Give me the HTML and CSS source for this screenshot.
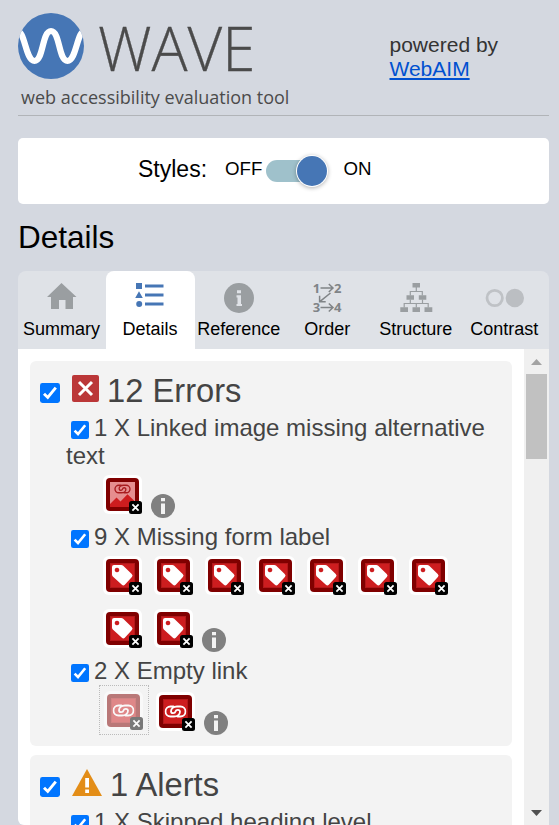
FILE: index.html
```html
<!DOCTYPE html>
<html lang="en">
<head>
<meta charset="utf-8">
<title>WAVE</title>
<link rel="stylesheet" href="styles.css">
</head>
<body>
<svg class="defs" aria-hidden="true">
  <symbol id="check" viewBox="0 0 18 18">
    <rect width="18" height="18" rx="2.2" fill="#0075ff"/>
    <path d="M3.6 9.6 7 13 14.2 4.2" fill="none" stroke="#fff" stroke-width="2.6"/>
  </symbol>
  <symbol id="info" viewBox="0 0 24 24">
    <circle cx="12" cy="12" r="12" fill="#808080"/>
    <path d="M10 4h4v3.3h-4zM10 9.4h4V20h-4z" fill="#f3f3f3"/>
  </symbol>
  <symbol id="tile" viewBox="0 0 39 39">
    <rect width="39" height="39" rx="6" fill="#fff"/>
    <rect x="3" y="3" width="33" height="33" rx="4" fill="#800000"/>
    <rect x="7" y="7" width="25" height="25" fill="#b3181a"/>
    <rect x="8" y="8" width="23" height="23" fill="#cd1d1f"/>
  </symbol>
  <symbol id="badge" viewBox="0 0 39 39">
    <rect x="26" y="26" width="13" height="13" rx="2.5" fill="#000"/>
    <path d="M29.4 29.4 35.6 35.6M35.6 29.4 29.4 35.6" stroke="#fff" stroke-width="1.8"/>
  </symbol>
  <symbol id="label" viewBox="0 0 39 39">
    <use href="#tile"/>
    <path fill="#fff" fill-rule="evenodd" d="M11 9h7.200q1.200 0 2 .8l8.500 8.300q1.600 1.500.2 3l-7.100 7.600q-1.400 1.500-2.900.1L9.800 20.500Q9 19.700 9 18.500V11q0-2 2-2zm3 2.700a2.300 2.300 0 1 0 .01 0z"/>
    <use href="#badge"/>
  </symbol>
  <symbol id="chain" viewBox="0 0 22 14">
    <path d="M9 2H6a5 5 0 0 0 0 10h3.500C13 12 15.500 9.800 15.500 7.300Q15.500 5.300 13.300 5.300M13 12h3a5 5 0 0 0 0-10h-3.500C9 2 6.500 4.200 6.500 6.700Q6.500 8.700 8.700 8.700 10.600 8.700 11 7T13.300 5.300" fill="none" stroke="currentColor" stroke-width="1.800" stroke-linecap="round"/>
  </symbol>
  <symbol id="link" viewBox="0 0 39 39">
    <use href="#tile"/>
    <use href="#chain" x="8.500" y="12.500" width="22" height="14" color="#fff"/>
    <use href="#badge"/>
  </symbol>
  <symbol id="linked-image" viewBox="0 0 39 39">
    <use href="#tile"/>
    <rect x="7" y="7" width="25" height="25" fill="#e68e8f"/>
    <path d="M7 29 13.500 22.500 17.500 26.500 24.500 19.300 32 26.500V32H7z" fill="#cd1d1f"/>
    <use href="#chain" x="10.500" y="8.800" width="18" height="10.500" color="#a81c1f"/>
    <use href="#badge"/>
  </symbol>
</svg>

<header class="header">
  <div class="brand">
    <div class="brand-row">
      <svg class="logo" viewBox="0 0 66 66">
        <clipPath id="disc"><circle cx="33" cy="33" r="33"/></clipPath>
        <circle cx="33" cy="33" r="33" fill="#4676b5"/>
        <path clip-path="url(#disc)" d="M-1 18C7 17 7.500 48 16.500 48S24 18 33 18s7.500 30 16.500 30S59 17 67 18" fill="none" stroke="#fff" stroke-width="6.200"/>
      </svg>
      <span class="wordmark">WAVE</span>
    </div>
    <div class="tagline">web accessibility evaluation tool</div>
  </div>
  <p class="powered">powered by<br><a href="#">WebAIM</a></p>
</header>

<section class="styles-bar">
  <span class="styles-label">Styles:</span>
  <span class="state">OFF</span>
  <span class="switch"><span class="knob"></span></span>
  <span class="state">ON</span>
</section>

<h1 class="title">Details</h1>

<nav class="tabs">
  <div class="tab">
    <svg class="tab-icon" viewBox="0 0 40 34"><path d="M19.500 2 34.500 16H31V28H23.500V19H17V28H9V16H5z" fill="#9a9ea1"/></svg>
    <span>Summary</span>
  </div>
  <div class="tab active">
    <svg class="tab-icon" viewBox="0 0 40 34"><g fill="#4676b5"><path d="M6 2h6v6H6zM9 10.300 12.800 17H5.200z"/><circle cx="9.200" cy="23" r="3"/><path d="M15 3.500h18.500v3H15zM15 12.500h18.500v3H15zM15 21.500h18.500v3H15z"/></g></svg>
    <span>Details</span>
  </div>
  <div class="tab">
    <svg class="tab-icon" viewBox="0 0 40 34"><circle cx="20" cy="17" r="15" fill="#9a9ea1"/><path d="M18 9.300h4v3h-4zM17.500 14.300h4.500V23h1v2h-5.500v-2h1v-6.500h-1z" fill="#dfe2e7"/></svg>
    <span>Reference</span>
  </div>
  <div class="tab">
    <svg class="tab-icon" viewBox="0 0 40 34"><g class="order-digits"><text x="5.800" y="11.500">1</text><text x="27" y="11.500">2</text><text x="5.800" y="31">3</text><text x="27" y="31">4</text></g><g fill="none" stroke="#808487" stroke-width="1.500"><path d="M13.500 7H26M21.800 3 26 7 21.800 11M13.500 26.500H26M21.800 22.500 26 26.500 21.800 30.500M23.500 12 12.500 20.800M12.600 14.800V20.700H18.700"/></g></svg>
    <span>Order</span>
  </div>
  <div class="tab">
    <svg class="tab-icon" viewBox="0 0 40 34"><path d="M16.500 2H24v4.500h-7.500zM10.500 14.200h7.500v4.500h-7.500zM22.800 14.200h7.500v4.500h-7.500zM4.300 26.300H12V31H4.300zM16.500 26.300H24V31h-7.500zM28.500 26.300h7.800V31h-7.800z" fill="#9a9ea1"/><path d="M20.300 6v4.500M14.300 14.500v-4h12v4M14.300 18.500v4M26.500 18.500v4M8.200 26.500v-4h24v4M20.300 22.500v4" fill="none" stroke="#9a9ea1" stroke-width="1.200"/></svg>
    <span>Structure</span>
  </div>
  <div class="tab">
    <svg class="tab-icon" viewBox="0 0 40 34"><circle cx="10.700" cy="17" r="7.700" fill="none" stroke="#bfc2c6" stroke-width="2.800"/><circle cx="30.800" cy="17" r="9.200" fill="#bbbec2"/></svg>
    <span>Contrast</span>
  </div>
</nav>

<main class="panel">
  <div class="groups">
    <section class="group">
      <h2 class="group-head">
        <svg class="check-lg"><use href="#check"/></svg>
        <svg class="error-icon" viewBox="0 0 27 27"><rect width="27" height="27" rx="2" fill="#bb3738"/><path d="M7 7 20 20M20 7 7 20" stroke="#fff" stroke-width="3"/></svg>
        <span>12 Errors</span>
      </h2>
      <div class="item">
        <h3><svg class="check"><use href="#check"/></svg>1 X Linked image missing alternative text</h3>
        <div class="icons first">
          <svg class="icon"><use href="#linked-image"/></svg>
          <svg class="info"><use href="#info"/></svg>
        </div>
      </div>
      <div class="item">
        <h3><svg class="check"><use href="#check"/></svg>9 X Missing form label</h3>
        <div class="icons labels">
          <svg class="icon"><use href="#label"/></svg>
          <svg class="icon"><use href="#label"/></svg>
          <svg class="icon"><use href="#label"/></svg>
          <svg class="icon"><use href="#label"/></svg>
          <svg class="icon"><use href="#label"/></svg>
          <svg class="icon"><use href="#label"/></svg>
          <svg class="icon"><use href="#label"/></svg>
          <svg class="icon"><use href="#label"/></svg>
          <svg class="icon"><use href="#label"/></svg>
          <svg class="info"><use href="#info"/></svg>
        </div>
      </div>
      <div class="item">
        <h3><svg class="check"><use href="#check"/></svg>2 X Empty link</h3>
        <div class="icons links">
          <span class="selected"><svg class="icon"><use href="#link"/></svg></span>
          <svg class="icon"><use href="#link"/></svg>
          <svg class="info"><use href="#info"/></svg>
        </div>
      </div>
    </section>
    <section class="group">
      <h2 class="group-head">
        <svg class="check-lg"><use href="#check"/></svg>
        <svg class="alert-icon" viewBox="0 0 30 27"><path d="M15 0 30 27H0z" fill="#e38d17"/><path d="M13.200 9h3.800v9.500h-3.800zM13.200 20.500h3.800v3.500h-3.800z" fill="#fff"/></svg>
        <span>1 Alerts</span>
      </h2>
      <div class="item">
        <h3><svg class="check"><use href="#check"/></svg>1 X Skipped heading level</h3>
      </div>
    </section>
  </div>
  <div class="scrollbar">
    <svg class="arrow" viewBox="0 0 11 6"><path d="M5.500 0 11 6H0z" fill="#a3a3a3"/></svg>
    <div class="thumb"></div>
    <svg class="arrow down" viewBox="0 0 11 6"><path d="M0 0H11L5.500 6z" fill="#505050"/></svg>
  </div>
</main>
</body>
</html>
```
FILE: styles.css
```css
* { box-sizing: border-box; }
body {
  margin: 0;
  height: 825px;
  padding: 0 10px 0 18px;
  overflow: hidden;
  display: flex;
  flex-direction: column;
  background: #d4d8e0;
  color: #000;
  font-family: "Liberation Sans", Arial, sans-serif;
}
svg { display: block; flex: none; }
.defs { position: absolute; width: 0; height: 0; }
h1, h2, h3, p { margin: 0; font-weight: 400; }

.header {
  flex: none;
  height: 116px;
  display: flex;
  border-bottom: 1px solid #b1b4b8;
}
.brand { width: 371.500px; padding-top: 13px; color: #4b4b4b; }
.brand-row { display: flex; height: 66px; gap: 14px; }
.logo { width: 66px; height: 66px; }
.wordmark {
  font: 300 60px/66px "Open Sans", sans-serif;
  padding-top: 2px;
  -webkit-text-stroke: .3px #4b4b4b;
}
.tagline {
  font: 400 18px/24px "Open Sans", sans-serif;
  padding: 6px 0 0 3px;
  white-space: nowrap;
}
.powered {
  padding-top: 33px;
  font-size: 21px;
  line-height: 24px;
  color: #333;
}
.powered a { color: #0050d0; }

.styles-bar {
  flex: none;
  height: 66px;
  margin-top: 22px;
  padding: 0 0 4px 120px;
  display: flex;
  align-items: center;
  background: #fff;
  border-radius: 5px;
}
.styles-label { font-size: 23px; width: 87px; }
.state { font-size: 18.700px; }
.switch {
  width: 61px;
  height: 22px;
  margin: 4px 16px 0 4px;
  display: flex;
  align-items: center;
  justify-content: flex-end;
  border-radius: 11px;
  background: linear-gradient(to right, #9fc1cb 50px, transparent 50px);
}
.knob {
  width: 30px;
  height: 30px;
  border-radius: 50%;
  background: #4676b5;
  box-shadow: 0 0 0 1px #fff, 0 1px 4px 1px rgba(0, 0, 0, .3);
}

.title { flex: none; height: 67px; padding-top: 14px; font-size: 31.500px; line-height: 38px; }

.tabs {
  flex: none;
  height: 78px;
  display: grid;
  grid-template-columns: 88px 89px repeat(4, 1fr);
  background: #dfe2e7;
  border-radius: 8px 8px 0 0;
}
.tab {
  display: flex;
  flex-direction: column;
  align-items: center;
  padding: 10px 1px 0 0;
  font-size: 18px;
  line-height: 22px;
  border-radius: 8px 8px 0 0;
}
.tab.active { background: #fff; }
.tab-icon { width: 40px; height: 34px; margin-bottom: 3px; }
.order-digits { font: 700 13px "Open Sans", sans-serif; fill: #808487; }

.panel {
  flex: 1;
  min-height: 0;
  display: flex;
  background: #fff;
  border-radius: 0 0 0 6px;
  overflow: hidden;
}
.groups { width: 506px; padding: 12px 12px 0; color: #444; }
.group { height: 385px; margin-bottom: 9px; background: #f3f3f3; border-radius: 6px; }
.group-head {
  display: flex;
  height: 52px;
  padding-left: 10px;
  font-size: 32.700px;
  line-height: 38px;
}
.group-head span { padding-top: 11px; }
.check-lg { width: 20px; height: 20px; margin: 22px 12px 0 0; }
.error-icon { width: 27px; height: 27px; margin: 14px 8px 0 0; }
.alert-icon { width: 30px; height: 27px; margin: 14px 8px 0 0; }
.item { padding-left: 36px; }
.item h3 { font-size: 24px; line-height: 28px; padding-top: 1px; }
.check {
  display: inline-block;
  width: 18px;
  height: 18px;
  margin: 0 5px 0 5px;
  vertical-align: -3px;
}
.icons { display: flex; flex-wrap: wrap; gap: 14px 12px; padding-left: 37px; align-items: flex-start; }
.icon { width: 39px; height: 39px; }
.info { width: 24px; height: 24px; }
.first { height: 52px; padding-top: 5px; }
.first .info { margin: 19px 0 0 -3px; }
.labels { height: 105px; padding: 5px 40px 0 37px; align-content: flex-start; }
.labels .info { margin: 19px 0 0 -3px; }
.links { padding-left: 33px; column-gap: 7px; }
.links .info { margin: 26px 0 0 2px; }
.links > .icon { margin-top: 7px; }
.selected {
  width: 50px;
  height: 50px;
  padding: 5px 0 0 4px;
  border: 1px dotted #bbb;
}
.selected .icon { opacity: .5; }

.scrollbar {
  width: 25px;
  background: #f0f0f0;
  display: flex;
  flex-direction: column;
  align-items: center;
  padding: 10px 0 9px;
}
.arrow { width: 11px; height: 6px; }
.thumb { width: 21px; height: 85px; margin-top: 9px; background: #c1c1c1; }
.down { margin-top: auto; }
```
